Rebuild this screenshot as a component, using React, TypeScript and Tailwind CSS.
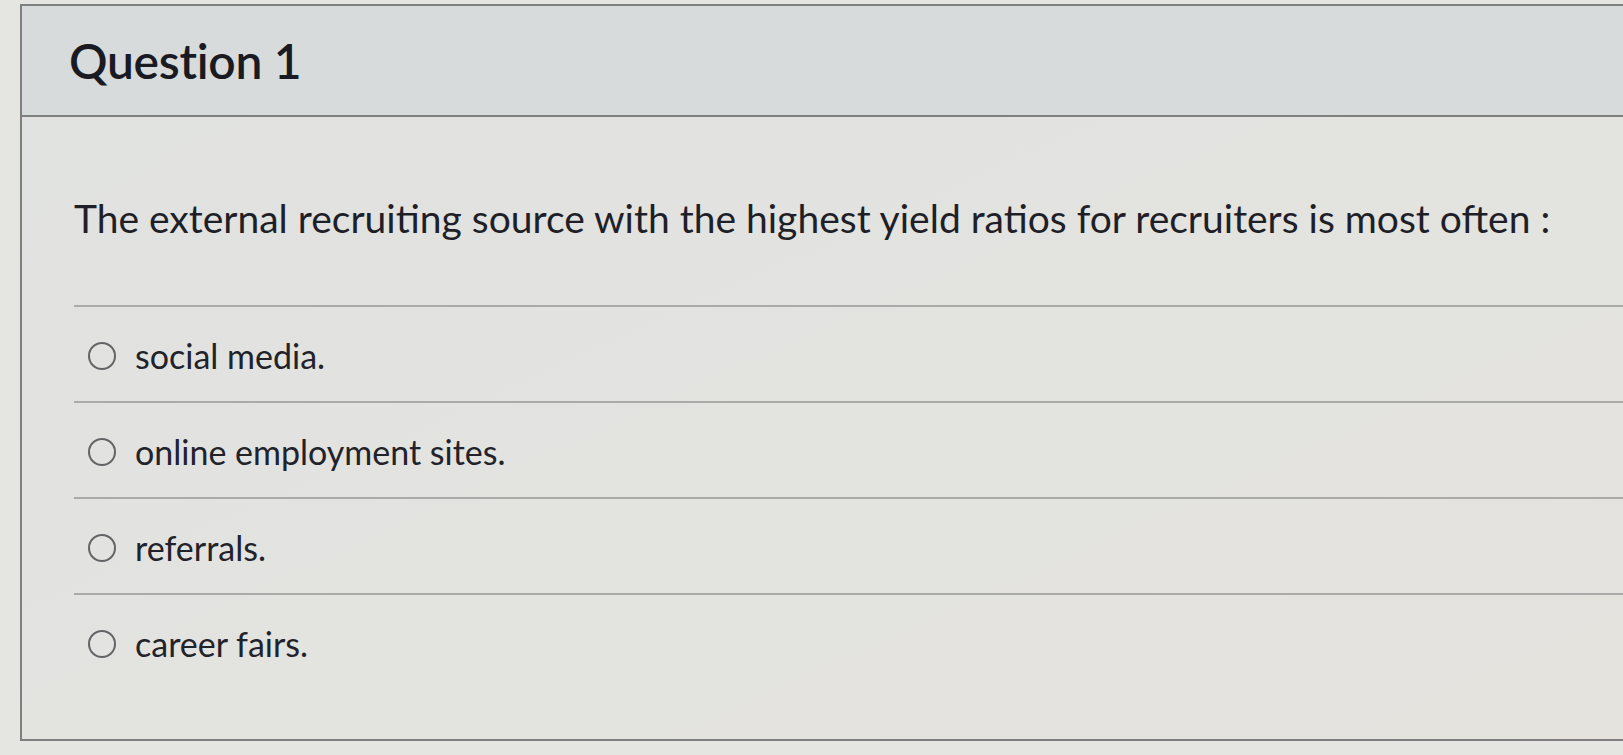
import React from "react";

const options = [
  "social media.",
  "online employment sites.",
  "referrals.",
  "career fairs.",
];

export default function App() {
  return (
    <div
      className="h-[755px] w-full overflow-hidden bg-[#e5e5e2] pt-[4px] pl-[20px]"
      style={{ fontFamily: "Lato, 'Open Sans', sans-serif" }}
    >
      <div className="h-[737px] border-2 border-r-0 border-[#7f7f7f] bg-gradient-to-br from-[#e0e2e1] via-[#e3e3e0] to-[#e4e3de]">
        <div className="flex h-[111px] items-center border-b-2 border-[#7f7f7f] bg-[#d8dbdb] pl-[47px]">
          <h1 className="text-[48px] leading-[56px] font-semibold tracking-[-0.3px] text-[#1a1a22]">
            Question 1
          </h1>
        </div>
        <div className="pl-[52px]">
          <p className="pt-[77px] text-[39px] leading-[48px] text-[#1f1f28]">
            The external recruiting source with the highest yield ratios for recruiters is most often :
          </p>
          <div className="mt-[63px]">
            {options.map((o) => (
              <div
                key={o}
                className="flex h-[96px] items-start gap-[19px] border-t-2 border-[#aaaaa8] pl-[14px] pt-[29px]"
              >
                <span className="mt-[6px] h-[28px] w-[28px] rounded-full border-2 border-[#646466]" />
                <span className="text-[34px] leading-[40px] text-[#22222a]">{o}</span>
              </div>
            ))}
          </div>
        </div>
      </div>
    </div>
  );
}
